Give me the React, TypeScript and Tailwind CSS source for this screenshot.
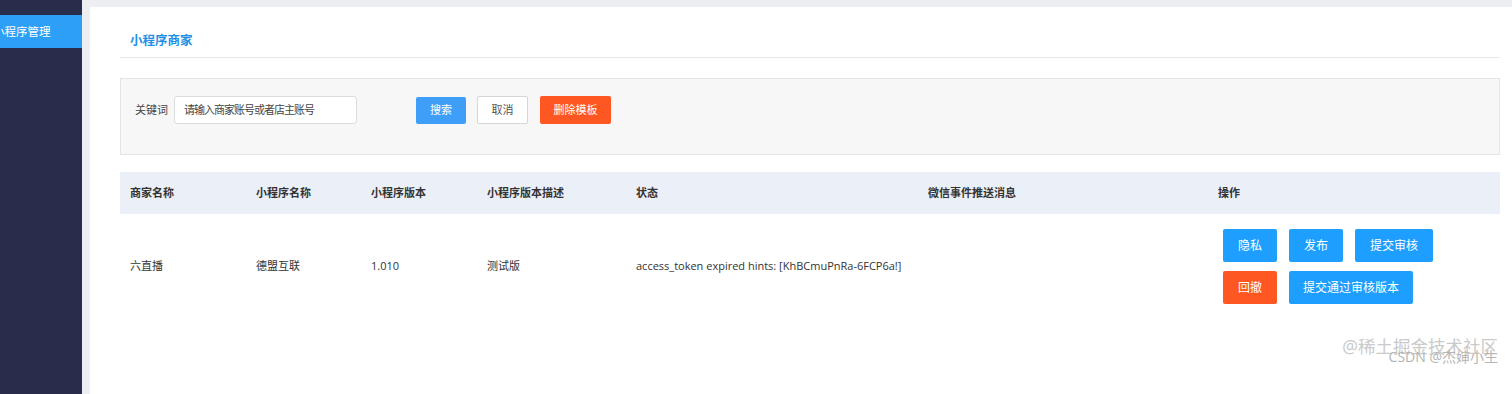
import React from 'react';

const columns = ['商家名称', '小程序名称', '小程序版本', '小程序版本描述', '状态', '微信事件推送消息', '操作'];

const gridCols = 'grid grid-cols-[126px_115px_116px_149px_292px_290px_1fr]';

const Btn: React.FC<{ label: string; tone?: 'blue' | 'orange'; w: string }> = ({ label, tone = 'blue', w }) => (
  <button
    className={`${w} h-[33px] rounded-[2px] text-[12px] text-white ${tone === 'blue' ? 'bg-[#1e9fff]' : 'bg-[#ff5722]'}`}
  >
    {label}
  </button>
);

export default function App() {
  return (
    <div
      className="flex h-[394px] w-[1512px] overflow-hidden bg-[#eceef1] text-[#333]"
      style={{ fontFamily: '"Open Sans", "Noto Sans CJK SC", sans-serif' }}
    >
      {/* sidebar */}
      <aside className="w-[82px] shrink-0 overflow-hidden bg-[#282d4b] pt-[15px]">
        <div className="flex h-[33px] items-center bg-[#2d9ff6] text-[11.5px] text-white whitespace-nowrap">
          <span className="-ml-[7px] pt-[1px]">小程序管理</span>
        </div>
      </aside>

      {/* main */}
      <main className="relative ml-[8px] mt-[7px] flex-1 bg-white pl-[30px] pr-[12px]">
        <div className="flex h-[51px] items-end border-b border-[#e8e8e8] pb-[6px] pl-[10px]">
          <h1 className="text-[12.5px] font-semibold text-[#1e90e8]">小程序商家</h1>
        </div>

        <div className="mt-[20px] h-[77px] border border-[#e4e4e4] bg-[#f7f7f7] px-[14px] pt-[17px]">
          <div className="flex items-center text-[11px]">
            <span className="mr-[6px] text-[#444]">关键词</span>
            <div className="flex h-[28px] w-[183px] items-center rounded-[3px] border border-[#dcdcdc] bg-white pl-[9px] tracking-[-1px] text-[#444]">
              请输入商家账号或者店主账号
            </div>
            <button className="ml-[59px] h-[27px] w-[50px] rounded-[2px] bg-[#3f9ef8] text-white">搜索</button>
            <button className="ml-[11px] h-[28px] w-[51px] rounded-[2px] border border-[#d6d6d6] bg-white text-[#555]">取消</button>
            <button className="ml-[12px] h-[28px] w-[71px] rounded-[2px] bg-[#ff5722] text-white">删除模板</button>
          </div>
        </div>

        <div className="mt-[17px]">
          <div className={`${gridCols} h-[42px] items-center bg-[#ebeff8] text-[11px] font-bold text-[#333]`}>
            {columns.map((c) => (
              <div key={c} className="pl-[10px]">
                {c}
              </div>
            ))}
          </div>
          <div className={`${gridCols} items-center py-[15px] text-[11px] text-[#333]`}>
            <div className="pl-[10px]">六直播</div>
            <div className="pl-[10px]">德盟互联</div>
            <div className="pl-[10px]">1.010</div>
            <div className="pl-[10px]">测试版</div>
            <div className="pl-[10px] whitespace-nowrap">access_token expired hints: [KhBCmuPnRa-6FCP6a!]</div>
            <div className="pl-[10px]"></div>
            <div className="flex flex-col gap-[9px] pl-[15px]">
              <div className="flex gap-[12px]">
                <Btn label="隐私" w="w-[54px]" />
                <Btn label="发布" w="w-[54px]" />
                <Btn label="提交审核" w="w-[78px]" />
              </div>
              <div className="flex gap-[12px]">
                <Btn label="回撤" tone="orange" w="w-[54px]" />
                <Btn label="提交通过审核版本" w="w-[124px]" />
              </div>
            </div>
          </div>
        </div>

        {/* watermark */}
        <div className="pointer-events-none absolute right-[14px] top-[331px] text-[17.5px] leading-none text-[#cacaca]">
          @稀土掘金技术社区
        </div>
        <div className="pointer-events-none absolute right-[14px] top-[343px] text-[14px] leading-none text-[#b4b4b4]">
          CSDN @杰婶小生
        </div>
      </main>
    </div>
  );
}
